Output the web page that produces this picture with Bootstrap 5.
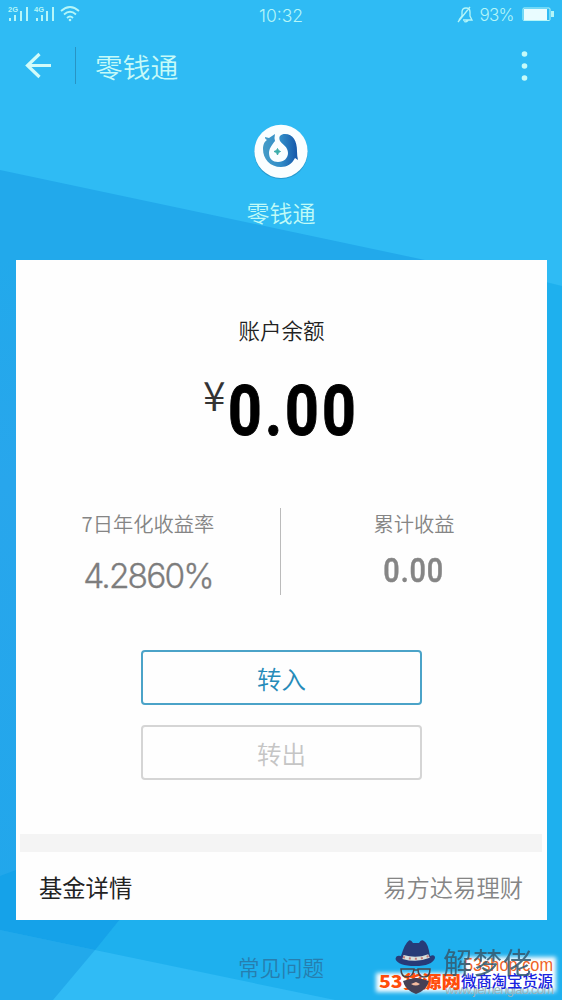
<!DOCTYPE html>
<html lang="zh-CN">
<head>
<meta charset="utf-8">
<meta name="viewport" content="width=device-width, initial-scale=1">
<title>零钱通</title>
<link href="https://cdn.jsdelivr.net/npm/bootstrap@5.3.0/dist/css/bootstrap.min.css" rel="stylesheet">
<style>
body{font-family:"Liberation Sans","Noto Sans CJK SC",sans-serif;background:#2fbbf4;color:#222}
.screen{width:562px;height:1000px}
.cjk{font-family:"Noto Sans CJK SC",sans-serif;font-weight:350;white-space:nowrap}
.facets{z-index:0}
.statusbar{height:30px;color:#b5f6f8;font:300 17.5px/31px Inter,sans-serif}
.appbar{height:70px;color:#c6faf8}
.appbar .rule{width:1px;height:37px;background:#2894c4}
.title{font-size:27.7px;line-height:40px;padding-left:3px;padding-top:2px}
.brand{height:160px;padding-top:24px;color:#c0faf7}
.brand-name{font-size:23px;line-height:34px;margin-top:15px}
.panel{margin:0 15px 0 16px;height:660px;background:#fefefe;width:531px}
.balance-label{font-size:21.5px;line-height:32px;padding-top:54px;color:#222}
.balance{height:76px;margin-top:20px;padding-left:187px}
.yen{font:350 41px/40px "Noto Sans CJK SC",sans-serif;color:#333;width:25px;margin-top:7px}
.din{font-family:Roboto,sans-serif;display:inline-block;transform-origin:0 0;white-space:nowrap}
.total{font-size:71px;line-height:76px;font-weight:700;color:#000;letter-spacing:3.7px;transform:scaleX(.83);margin-top:7px;-webkit-text-stroke:1px #000}
.stats{height:87px;margin-top:66px}
.stat-left{width:264px}
.stat-right{width:266px}
.vline{width:1px;background:#bbb}
.stat-label{font-size:20.3px;line-height:30px;color:#858585}
.rate{font:300 33.5px/40px Inter,sans-serif;color:#7d7d7d;margin-top:18px;letter-spacing:-1.9px;-webkit-text-stroke:.3px #7d7d7d}
.gain{font-size:34px;line-height:40px;font-weight:500;color:#858585;margin-top:12px;letter-spacing:1px;transform:scaleX(.85);transform-origin:50% 0;-webkit-text-stroke:.5px #858585}
.actions{margin-top:55px;gap:20px}
.actions .btn{width:281px;height:55px;border-width:2px;border-radius:4px;font-size:24.5px;line-height:53px;padding:0}
.btn-in{color:#268bb9;border-color:#4ba3c8}
.btn-out{color:#c5c5c5;border-color:#d5d5d5}
.band{height:18px;background:#f4f4f4;margin:54px 5px 0 4px}
.detail{height:67px;padding:4px 24px 0 23px;font-size:23.3px;color:#222}
.detail .fund{color:#858585}
.faq{font-size:21.5px;line-height:32px;padding-top:31px;color:#267eaf}
.marks{left:370px;top:930px;width:192px;height:70px}
</style>
</head>
<body>
<main class="screen position-relative overflow-hidden">
<svg class="facets position-absolute top-0 start-0" width="562" height="1000" viewBox="0 0 562 1000">
<defs><linearGradient id="edge" x1="0" y1="0" x2="0" y2="1"><stop stop-color="#22a9eb"/><stop offset=".3" stop-color="#28a6ec"/><stop offset="1" stop-color="#20a7eb"/></linearGradient></defs>
<path fill="#2fbbf4" d="M0 0h562v1000H0z"/>
<path fill="#22a9eb" d="M0 170L425 260 562 287V1000H0z"/>
<path fill="#1eb0ee" d="M546 282l16 4v714H546z"/>
<path fill="url(#edge)" d="M0 260h16V1000H0z"/>
<path fill="#1eb0ee" d="M120 919H562V1000H330L95 950z"/>
<path fill="#15a2e9" d="M16 870V919H120L95 950 0 930V876z"/>
<path fill="#22a9eb" d="M0 930l95 20-42 50H0z"/>
<path fill="#30bbf5" d="M95 950l240 50H53z"/>
</svg>
<div class="position-relative">
<header>
<div class="statusbar position-relative d-flex justify-content-center"><span>10:32</span>
<svg class="position-absolute top-0 start-0" width="90" height="30" viewBox="0 0 90 30" fill="none" stroke="#b5f6f8">
<path stroke-width="2" d="M10 18v3M15 15v6M21 11v10M27 7v14M37 18v3M42 15v6M47 11v10M53 7v14"/>
<g fill="#b5f6f8" stroke="none" font-family="Liberation Sans" font-weight="700" font-size="7.5"><text x="8" y="12">2G</text><text x="34" y="12">4G</text></g>
<path stroke-width="1.8" d="M61 11Q70 3 79 11M64 14.500Q70 9 76 14.500M67 18Q70 15 73 18"/><circle cx="70" cy="20" r="1.300" fill="#b5f6f8" stroke="none"/>
</svg>
<svg class="position-absolute top-0 end-0" width="110" height="30" viewBox="452 0 110 30" fill="none" stroke="#b5f6f8">
<path stroke-width="1.300" d="M459 20l3-4V12q0-4 4-4t4 4v4l2 4h-9M464 21.500q2 1 4-1M458 22L470 7"/>
<text x="479.500" y="20.500" fill="#b5f6f8" stroke="none" font-family="Inter" font-weight="300" font-size="17" textLength="35">93%</text>
<rect x="523" y="8" width="27" height="12.500" rx="1"/><path fill="#e9fcff" stroke="none" d="M524 9h23v11h-23z"/><path fill="#b5f6f8" stroke="none" d="M551 11h3v6h-3z"/>
</svg></div>
<div class="appbar d-flex align-items-center">
<svg width="75" height="60" viewBox="0 35 75 60" fill="none" stroke="#d1fbf9" stroke-width="3.2"><path d="M51 65.500H28M39.500 54L27.500 65.500 39.500 77"/></svg>
<div class="rule"></div><div class="title cjk ms-3">零钱通</div>
<svg class="ms-auto" width="50" height="60" viewBox="512 35 50 60" fill="#c6faf8"><circle cx="524.500" cy="54" r="2.800"/><circle cx="524.500" cy="66" r="2.800"/><circle cx="524.500" cy="78" r="2.800"/></svg>
</div>
</header>
<section class="brand d-flex flex-column align-items-center">
<svg width="56" height="56" viewBox="0 0 56 56">
<defs><linearGradient id="sea" x1="0" x2="1"><stop stop-color="#459cc7"/><stop offset=".5" stop-color="#318dc8"/><stop offset="1" stop-color="#1455a8"/></linearGradient></defs>
<circle cx="28" cy="28.200" r="26.800" fill="#279ace"/><circle cx="28" cy="27.300" r="26.600" fill="#fafeff"/>
<path fill="url(#sea)" d="M12 13l4 1 6-4q-1 4 0 7c-4 5-6 8-6 12 0 6 4 9 9 9 6 0 10-4 10-9 0-6-5-8-8-12-2-5 1-7 5-7 8 0 12 7 12 17q0 5 1 9l-3-2c-3 6-8 9-14 9-11 0-18-8-18-18 0-5 2-8 4-9-2-1-2-2-2-3z"/>
<path fill="#3cadab" d="M24.500 24.500l1 2 2 1-2 1-1 2.500-1-2.500-2.500-1 2.500-1z" stroke="#3cadab"/>
</svg>
<div class="brand-name cjk">零钱通</div>
</section>
<section class="panel d-flex flex-column">
<div class="balance-label cjk text-center">账户余额</div>
<div class="balance d-flex"><span class="yen">¥</span><span class="din total">0.00</span></div>
<div class="stats d-flex">
<div class="stat-left text-center"><div class="stat-label cjk">7日年化收益率</div><div class="rate">4.2860%</div></div>
<div class="vline"></div>
<div class="stat-right text-center"><div class="stat-label cjk">累计收益</div><div class="din gain">0.00</div></div>
</div>
<div class="actions d-flex flex-column align-items-center"><button class="btn btn-in cjk">转入</button><button class="btn btn-out cjk">转出</button></div>
<div class="band"></div>
<div class="detail cjk d-flex justify-content-between align-items-center"><span class="fw-normal">基金详情</span><span class="fund">易方达易理财</span></div>
</section>
<footer class="faq cjk text-center">常见问题</footer>
</div>
<svg class="marks position-absolute" viewBox="370 930 192 70">
<defs><filter id="glow" x="-20%" y="-30%" width="140%" height="160%"><feGaussianBlur stdDeviation="2"/></filter></defs>
<path fill="#fff" filter="url(#glow)" d="M376 973H464V957H556V992H376z"/>
<g font-family="Noto Sans CJK SC">
<text x="445" y="994" font-family="Liberation Sans" font-size="13" fill="#9ab3bb" textLength="109">www.jiemenglao.com</text>
<text x="464" y="970.500" font-family="Liberation Sans" font-size="17.500" fill="#ef6428" textLength="89" lengthAdjust="spacingAndGlyphs">53shop.com</text>
<text x="379" y="987.500" font-size="17" font-weight="900" fill="#ff4d0b" textLength="82" lengthAdjust="spacingAndGlyphs">53货源网</text>
<text x="461" y="987" font-size="15.500" font-weight="500" fill="#1722e0" textLength="92">微商淘宝货源</text>
<text x="443" y="974" font-size="29" fill="#335c73" opacity=".88" textLength="89">解梦佬</text>
</g>
<path fill="#273b78" d="M401 956q4-13 8-15.500 2-1 4 2.500h6q2-4 5-2 4 2 6 15 5-2 5 2-3 8-20 8-17 0-19.500-7 .5-4.500 5.500-3z"/>
<path fill="none" stroke="#d7dfdc" stroke-width="4" d="M403 957q14 4 26-1"/><path fill="none" stroke="#c57977" stroke-width="2" stroke-dasharray="2 4" d="M403 957q14 4 26-1"/>
<path fill="none" stroke="#4b4448" stroke-width="1.500" d="M401 969h13q-1 8-7 8t-6-8zM418 969h12q0 8-6 8t-6-8zM414 970h4"/>
<path fill="#454055" d="M403 981q9-3 13-3 4 0 13 3-2 9-13 13-11-4-13-13z"/><path fill="#f5bca0" d="M411 984q5 3 9 0l-4-2z"/>
</svg>
</main>
<script src="https://cdn.jsdelivr.net/npm/bootstrap@5.3.0/dist/js/bootstrap.bundle.min.js"></script>
</body>
</html>
